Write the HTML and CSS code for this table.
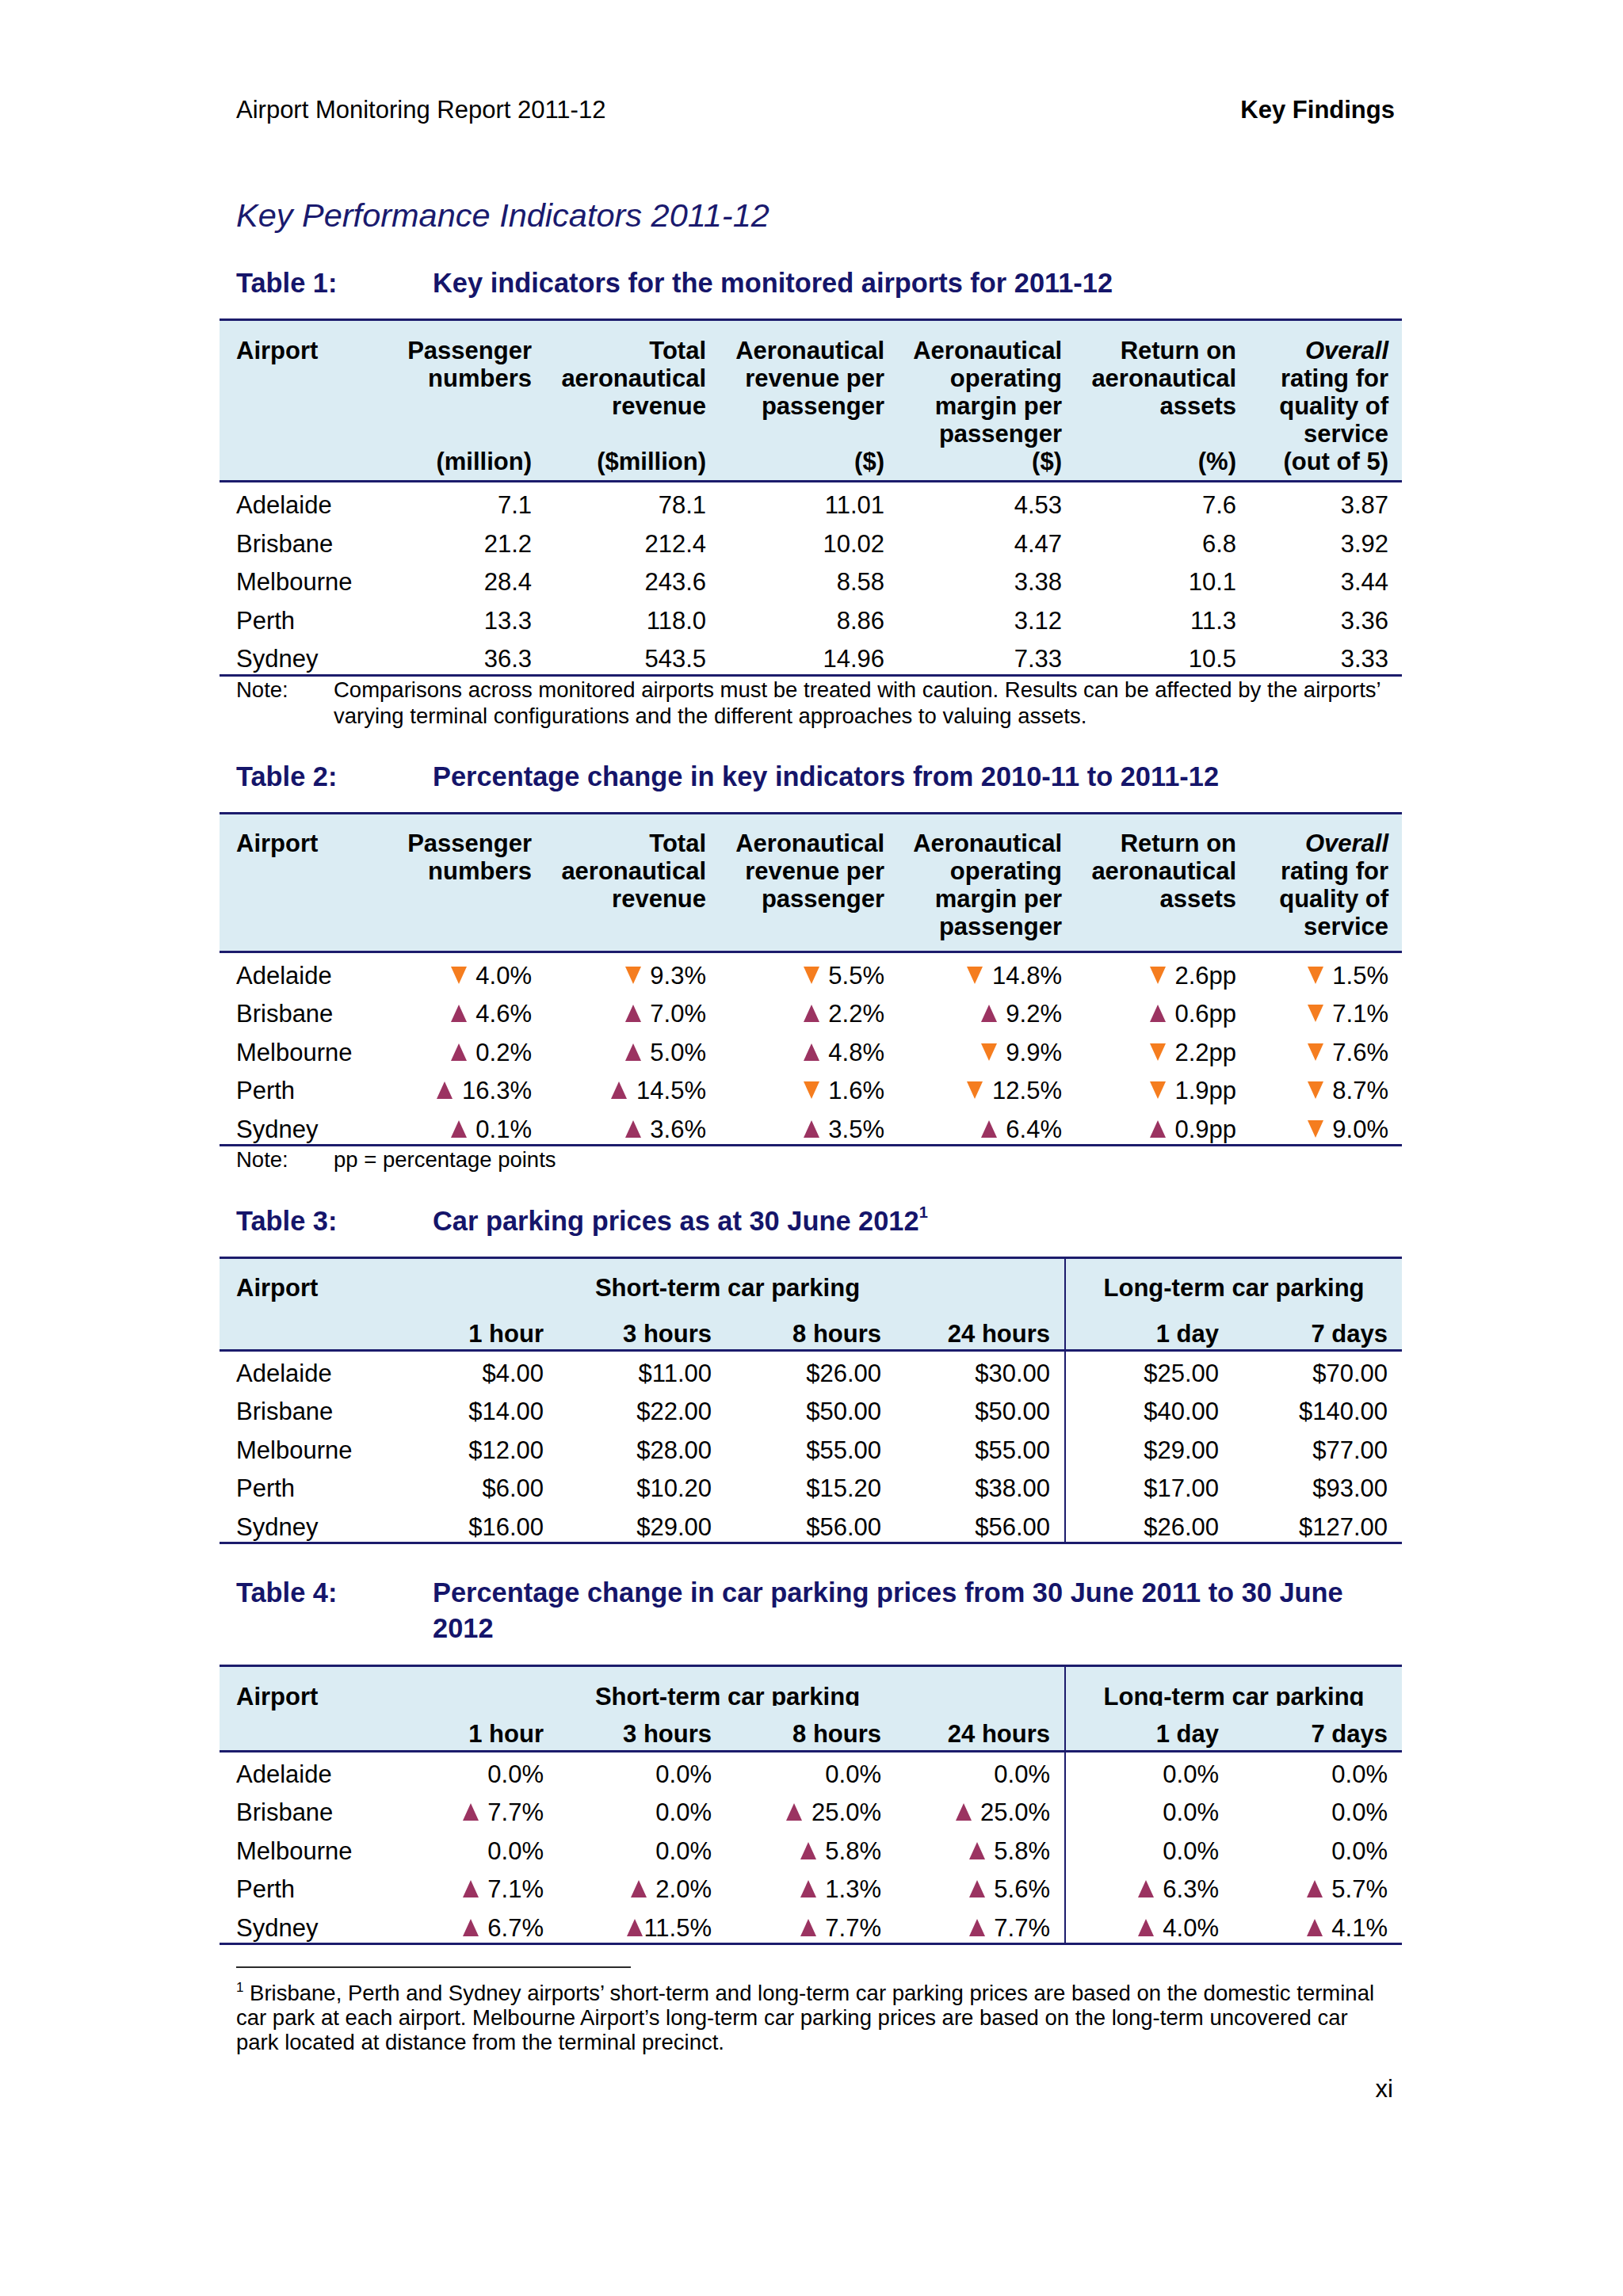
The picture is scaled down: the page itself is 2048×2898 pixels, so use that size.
FILE: index.html
```html
<!DOCTYPE html>
<html lang="en">
<head>
<meta charset="utf-8">
<title>Airport Monitoring Report 2011-12 — Key Findings</title>
<link rel="stylesheet" href="styles.css">
</head>
<body>
<div class="page">
  <div class="running">
    <span>Airport Monitoring Report 2011-12</span>
    <span class="sec">Key Findings</span>
  </div>

  <h1 class="title">Key Performance Indicators 2011-12</h1>

  <div class="caption"><span class="lab">Table 1:</span><span>Key indicators for the monitored airports for 2011-12</span></div>
  <table class="kpi t12 t1">
    <colgroup><col class="c1"><col class="c2"><col class="c3"><col class="c4"><col class="c5"><col class="c6"><col class="c7"></colgroup>
    <thead>
      <tr>
        <th class="ap">Airport</th>
        <th>Passenger<br>numbers<br><br><br>(million)</th>
        <th>Total<br>aeronautical<br>revenue<br><br>($million)</th>
        <th>Aeronautical<br>revenue per<br>passenger<br><br>($)</th>
        <th>Aeronautical<br>operating<br>margin per<br>passenger<br>($)</th>
        <th>Return on<br>aeronautical<br>assets<br><br>(%)</th>
        <th><i>Overall</i><br>rating for<br>quality of<br>service<br>(out of 5)</th>
      </tr>
    </thead>
    <tbody>
      <tr class="first"><td class="ap">Adelaide</td><td>7.1</td><td>78.1</td><td>11.01</td><td>4.53</td><td>7.6</td><td>3.87</td></tr>
      <tr><td class="ap">Brisbane</td><td>21.2</td><td>212.4</td><td>10.02</td><td>4.47</td><td>6.8</td><td>3.92</td></tr>
      <tr><td class="ap">Melbourne</td><td>28.4</td><td>243.6</td><td>8.58</td><td>3.38</td><td>10.1</td><td>3.44</td></tr>
      <tr><td class="ap">Perth</td><td>13.3</td><td>118.0</td><td>8.86</td><td>3.12</td><td>11.3</td><td>3.36</td></tr>
      <tr class="last"><td class="ap">Sydney</td><td>36.3</td><td>543.5</td><td>14.96</td><td>7.33</td><td>10.5</td><td>3.33</td></tr>
    </tbody>
  </table>
  <div class="note"><span class="lab">Note:</span><span>Comparisons across monitored airports must be treated with caution. Results can be affected by the airports’<br>varying terminal configurations and the different approaches to valuing assets.</span></div>

  <div class="caption"><span class="lab">Table 2:</span><span>Percentage change in key indicators from 2010-11 to 2011-12</span></div>
  <table class="kpi t12 t2">
    <colgroup><col class="c1"><col class="c2"><col class="c3"><col class="c4"><col class="c5"><col class="c6"><col class="c7"></colgroup>
    <thead>
      <tr>
        <th class="ap">Airport</th>
        <th>Passenger<br>numbers</th>
        <th>Total<br>aeronautical<br>revenue</th>
        <th>Aeronautical<br>revenue per<br>passenger</th>
        <th>Aeronautical<br>operating<br>margin per<br>passenger</th>
        <th>Return on<br>aeronautical<br>assets</th>
        <th><i>Overall</i><br>rating for<br>quality of<br>service</th>
      </tr>
    </thead>
    <tbody>
      <tr class="first"><td class="ap">Adelaide</td><td><span class="dn"></span> 4.0%</td><td><span class="dn"></span> 9.3%</td><td><span class="dn"></span> 5.5%</td><td><span class="dn"></span> 14.8%</td><td><span class="dn"></span> 2.6pp</td><td><span class="dn"></span> 1.5%</td></tr>
      <tr><td class="ap">Brisbane</td><td><span class="up"></span> 4.6%</td><td><span class="up"></span> 7.0%</td><td><span class="up"></span> 2.2%</td><td><span class="up"></span> 9.2%</td><td><span class="up"></span> 0.6pp</td><td><span class="dn"></span> 7.1%</td></tr>
      <tr><td class="ap">Melbourne</td><td><span class="up"></span> 0.2%</td><td><span class="up"></span> 5.0%</td><td><span class="up"></span> 4.8%</td><td><span class="dn"></span> 9.9%</td><td><span class="dn"></span> 2.2pp</td><td><span class="dn"></span> 7.6%</td></tr>
      <tr><td class="ap">Perth</td><td><span class="up"></span> 16.3%</td><td><span class="up"></span> 14.5%</td><td><span class="dn"></span> 1.6%</td><td><span class="dn"></span> 12.5%</td><td><span class="dn"></span> 1.9pp</td><td><span class="dn"></span> 8.7%</td></tr>
      <tr class="last"><td class="ap">Sydney</td><td><span class="up"></span> 0.1%</td><td><span class="up"></span> 3.6%</td><td><span class="up"></span> 3.5%</td><td><span class="up"></span> 6.4%</td><td><span class="up"></span> 0.9pp</td><td><span class="dn"></span> 9.0%</td></tr>
    </tbody>
  </table>
  <div class="note"><span class="lab">Note:</span><span>pp = percentage points</span></div>

  <div class="caption"><span class="lab">Table 3:</span><span>Car parking prices as at 30 June 2012<sup class="fnref">1</sup></span></div>
  <table class="kpi t34 t3">
    <colgroup><col class="d1"><col class="d2"><col class="d3"><col class="d4"><col class="d5"><col class="d6"><col class="d7"></colgroup>
    <thead>
      <tr class="h1">
        <th class="ap" rowspan="2">Airport</th>
        <th class="grp" colspan="4">Short-term car parking</th>
        <th class="grp vl" colspan="2">Long-term car parking</th>
      </tr>
      <tr class="h2">
        <th>1 hour</th><th>3 hours</th><th>8 hours</th><th>24 hours</th><th class="vl">1 day</th><th>7 days</th>
      </tr>
    </thead>
    <tbody>
      <tr class="first"><td class="ap">Adelaide</td><td>$4.00</td><td>$11.00</td><td>$26.00</td><td>$30.00</td><td class="vl">$25.00</td><td>$70.00</td></tr>
      <tr><td class="ap">Brisbane</td><td>$14.00</td><td>$22.00</td><td>$50.00</td><td>$50.00</td><td class="vl">$40.00</td><td>$140.00</td></tr>
      <tr><td class="ap">Melbourne</td><td>$12.00</td><td>$28.00</td><td>$55.00</td><td>$55.00</td><td class="vl">$29.00</td><td>$77.00</td></tr>
      <tr><td class="ap">Perth</td><td>$6.00</td><td>$10.20</td><td>$15.20</td><td>$38.00</td><td class="vl">$17.00</td><td>$93.00</td></tr>
      <tr class="last"><td class="ap">Sydney</td><td>$16.00</td><td>$29.00</td><td>$56.00</td><td>$56.00</td><td class="vl">$26.00</td><td>$127.00</td></tr>
    </tbody>
  </table>

  <div class="caption cap4"><span class="lab">Table 4:</span><span>Percentage change in car parking prices from 30 June 2011 to 30 June<br>2012</span></div>
  <table class="kpi t34 t4">
    <colgroup><col class="d1"><col class="d2"><col class="d3"><col class="d4"><col class="d5"><col class="d6"><col class="d7"></colgroup>
    <thead>
      <tr class="h1">
        <th class="ap" rowspan="2">Airport</th>
        <th class="grp" colspan="4"><span class="clip">Short-term car parking</span></th>
        <th class="grp vl" colspan="2"><span class="clip">Long-term car parking</span></th>
      </tr>
      <tr class="h2">
        <th>1 hour</th><th>3 hours</th><th>8 hours</th><th>24 hours</th><th class="vl">1 day</th><th>7 days</th>
      </tr>
    </thead>
    <tbody>
      <tr class="first"><td class="ap">Adelaide</td><td>0.0%</td><td>0.0%</td><td>0.0%</td><td>0.0%</td><td class="vl">0.0%</td><td>0.0%</td></tr>
      <tr><td class="ap">Brisbane</td><td><span class="up"></span> 7.7%</td><td>0.0%</td><td><span class="up"></span> 25.0%</td><td><span class="up"></span> 25.0%</td><td class="vl">0.0%</td><td>0.0%</td></tr>
      <tr><td class="ap">Melbourne</td><td>0.0%</td><td>0.0%</td><td><span class="up"></span> 5.8%</td><td><span class="up"></span> 5.8%</td><td class="vl">0.0%</td><td>0.0%</td></tr>
      <tr><td class="ap">Perth</td><td><span class="up"></span> 7.1%</td><td><span class="up"></span> 2.0%</td><td><span class="up"></span> 1.3%</td><td><span class="up"></span> 5.6%</td><td class="vl"><span class="up"></span> 6.3%</td><td><span class="up"></span> 5.7%</td></tr>
      <tr class="last"><td class="ap">Sydney</td><td><span class="up"></span> 6.7%</td><td><span class="up tight"></span>11.5%</td><td><span class="up"></span> 7.7%</td><td><span class="up"></span> 7.7%</td><td class="vl"><span class="up"></span> 4.0%</td><td><span class="up"></span> 4.1%</td></tr>
    </tbody>
  </table>

  <div class="fnrule"></div>
  <p class="footnote"><sup class="fnmark">1</sup> Brisbane, Perth and Sydney airports’ short-term and long-term car parking prices are based on the domestic terminal<br>car park at each airport. Melbourne Airport’s long-term car parking prices are based on the long-term uncovered car<br>park located at distance from the terminal precinct.</p>

  <div class="pageno">xi</div>
</div>
</body>
</html>
```

FILE: styles.css
```css
html, body {
  margin: 0;
  padding: 0;
  background: #ffffff;
}

body {
  font-family: "Liberation Sans", Arial, "Helvetica", sans-serif;
  color: #000000;
}

.page {
  width: 1462px;
  min-height: 2777px;
  padding: 121px 0 0 298px;
}

.running {
  display: flex;
  justify-content: space-between;
  font-size: 31px;
  line-height: 36px;
}

.running .sec {
  font-weight: bold;
}

.title {
  margin: 91px 0 0 0;
  font-size: 41.5px;
  line-height: 48px;
  font-style: italic;
  font-weight: normal;
  color: #1a1a6e;
}

.caption {
  display: flex;
  margin-top: 38.5px;
  font-size: 34.4px;
  line-height: 45px;
  font-weight: bold;
  color: #15156a;
}

.caption .lab {
  flex: none;
  width: 248px;
}

.fnref {
  font-size: 20px;
  line-height: 0;
  vertical-align: 16px;
}

/* tables */
.kpi {
  margin-left: -21px;
  width: 1492px;
  table-layout: fixed;
  border-collapse: separate;
  border-spacing: 0;
  font-size: 31px;
  line-height: 35px;
}

.kpi th {
  font-weight: bold;
  text-align: right;
  vertical-align: top;
  background: #dbecf3;
}

.kpi td {
  text-align: right;
  white-space: nowrap;
}

.kpi .ap {
  text-align: left;
  padding-left: 21px;
}

.kpi thead tr:first-child th {
  border-top: 3px solid #1c1c6c;
}

.kpi tr.last td {
  border-bottom: 3px solid #1c1c6c;
}

.kpi tbody td {
  padding-top: 6.75px;
  padding-bottom: 6.75px;
}

.kpi tr.last td {
  padding-bottom: 1.5px;
}

/* tables 1 and 2 */
.t12 .c1 { width: 223px; }
.t12 .c2 { width: 181px; }
.t12 .c3 { width: 220px; }
.t12 .c4 { width: 225px; }
.t12 .c5 { width: 224px; }
.t12 .c6 { width: 220px; }
.t12 .c7 { width: 199px; }

.t12 th,
.t12 td {
  padding-right: 10px;
}

.t12 th:last-child,
.t12 td:last-child {
  padding-right: 17px;
}

.t12 th {
  padding-top: 19.5px;
  border-bottom: 3px solid #1c1c6c;
}

.t1 {
  margin-top: 22.5px;
}

.t1 th {
  padding-bottom: 6.5px;
}

.t2 {
  margin-top: 21.5px;
}

.t2 th {
  padding-bottom: 12.5px;
}

.t12 tr.first td {
  padding-top: 11px;
}

/* tables 3 and 4 */
.t34 .d1 { width: 216px; }
.t34 .d2 { width: 211px; }
.t34 .d3 { width: 212px; }
.t34 .d4 { width: 214px; }
.t34 .d5 { width: 213px; }
.t34 .d6 { width: 213px; }
.t34 .d7 { width: 213px; }

.t34 th,
.t34 td {
  padding-right: 18px;
}

.t34 th.grp {
  text-align: center;
  padding-left: 18px;
}

.t34 .vl {
  border-left: 2px solid #1c1c6c;
}

.t34 tr.h2 th,
.t34 th.ap {
  border-bottom: 3px solid #1c1c6c;
}

.t34 tr.first td {
  padding-top: 9.5px;
}

.t3 {
  margin-top: 22.5px;
}

.t3 tr.h1 th {
  padding-top: 18.5px;
  padding-bottom: 23px;
}

.t3 tr.h2 th {
  padding-top: 0;
  padding-bottom: 2.5px;
}

.t3 th.ap {
  padding-bottom: 2.5px;
}

.cap4 {
  margin-top: 38.5px;
}

.t4 {
  margin-top: 23.5px;
}

.t4 tr.h1 th {
  padding-top: 20px;
  padding-bottom: 11.5px;
}

.t4 tr.h2 th {
  padding-top: 0;
  padding-bottom: 3.5px;
}

.t4 th.ap {
  padding-bottom: 3.5px;
}

.clip {
  display: inline-block;
  vertical-align: top;
  height: 29px;
  overflow: hidden;
}

/* change markers */
.up,
.dn {
  display: inline-block;
  width: 0;
  height: 0;
  border-left: 10.5px solid transparent;
  border-right: 10.5px solid transparent;
  margin-right: 3px;
}

.up {
  border-bottom: 22px solid #9b3361;
}

.dn {
  border-top: 22px solid #f57d1f;
}

.up.tight {
  margin-right: 1px;
}

/* notes */
.note {
  display: flex;
  font-size: 27.5px;
  line-height: 33px;
}

.note .lab {
  flex: none;
  width: 123px;
}

.fnrule {
  margin-top: 27px;
  width: 498px;
  height: 2px;
  background: #2b2b2b;
}

.footnote {
  margin: 15.5px 0 0 0;
  font-size: 27.5px;
  line-height: 31px;
}

.fnmark {
  font-size: 17px;
  line-height: 0;
  vertical-align: 11px;
}

.pageno {
  margin-top: 26.5px;
  text-align: right;
  font-size: 31px;
  line-height: 36px;
  padding-right: 2px;
}
```
